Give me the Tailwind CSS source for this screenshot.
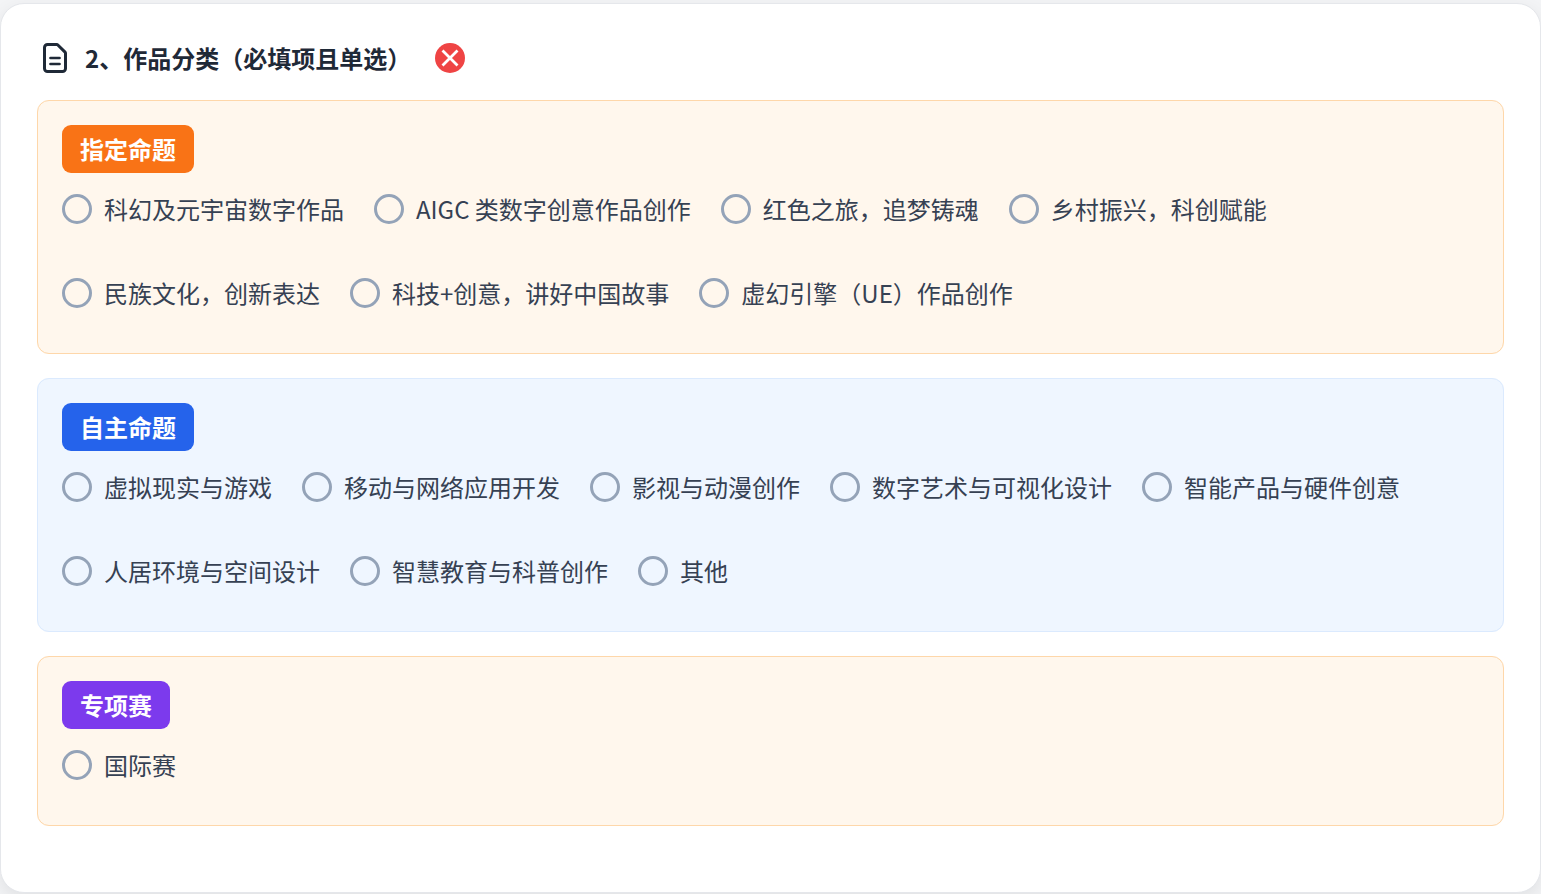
<!DOCTYPE html>
<html lang="zh-CN">

<head>
    <meta charset="UTF-8">
    <meta name="viewport" content="width=device-width, initial-scale=1.0">
    <title>作品分类</title>
    <script src="https://cdn.jsdelivr.net/npm/@tailwindcss/browser@4"></script>
</head>

<body class="flex flex-col min-h-screen pt-[3px] pb-px bg-[#f3f4f6] text-gray-700 text-2xl/9 font-['Noto_Sans_CJK_SC',sans-serif]">

    <form class="flex-1 bg-white border border-[#e5e7eb] rounded-3xl p-9 shadow-[0_6px_18px_rgba(0,0,0,0.08)]">

        <!-- Title -->
        <div class="flex items-center mb-6">
            <svg class="w-9 h-9 mr-3 text-[#1f2937]" viewBox="0 0 24 24" fill="none" stroke="currentColor" stroke-width="2" stroke-linecap="round" stroke-linejoin="round" aria-hidden="true">
                <path d="M13.2 3H7a2 2 0 0 0-2 2v14a2 2 0 0 0 2 2h10a2 2 0 0 0 2-2V8.8a1 1 0 0 0-.3-.7l-4.8-4.8a1 1 0 0 0-.7-.3z" />
                <path d="M9 12h6M9 16h6" stroke-width="1.8" />
            </svg>
            <h2 class="font-semibold text-[#1f2937]">2、作品分类（必填项且单选）</h2>
            <span class="flex items-center justify-center w-[30px] h-[30px] ml-6 rounded-full bg-[#ef4444]">
                <svg class="w-[18px] h-[18px]" viewBox="0 0 18 18" fill="none" stroke="#fff" stroke-width="2.8" aria-hidden="true">
                    <path d="M1.5 1.5l15 15M16.5 1.5l-15 15" />
                </svg>
            </span>
        </div>

        <div class="flex flex-col gap-6">

            <fieldset class="bg-[#fff7ed] border border-[#fed7aa] rounded-xl p-6">
                <legend class="float-left px-[18px] py-1.5 rounded-[9px] bg-[#f97316] text-white font-bold">指定命题</legend>
                <div class="clear-both flex flex-wrap gap-x-[30px] gap-y-12 py-[18px]">
                    <label class="flex items-center gap-3"><input type="radio" name="category" class="appearance-none w-[30px] h-[30px] rounded-full border-3 border-[#94a3b8] checked:bg-[#94a3b8]">科幻及元宇宙数字作品</label>
                    <label class="flex items-center gap-3"><input type="radio" name="category" class="appearance-none w-[30px] h-[30px] rounded-full border-3 border-[#94a3b8] checked:bg-[#94a3b8]">AIGC 类数字创意作品创作</label>
                    <label class="flex items-center gap-3"><input type="radio" name="category" class="appearance-none w-[30px] h-[30px] rounded-full border-3 border-[#94a3b8] checked:bg-[#94a3b8]">红色之旅，追梦铸魂</label>
                    <label class="flex items-center gap-3"><input type="radio" name="category" class="appearance-none w-[30px] h-[30px] rounded-full border-3 border-[#94a3b8] checked:bg-[#94a3b8]">乡村振兴，科创赋能</label>
                    <label class="flex items-center gap-3"><input type="radio" name="category" class="appearance-none w-[30px] h-[30px] rounded-full border-3 border-[#94a3b8] checked:bg-[#94a3b8]">民族文化，创新表达</label>
                    <label class="flex items-center gap-3"><input type="radio" name="category" class="appearance-none w-[30px] h-[30px] rounded-full border-3 border-[#94a3b8] checked:bg-[#94a3b8]">科技+创意，讲好中国故事</label>
                    <label class="flex items-center gap-3"><input type="radio" name="category" class="appearance-none w-[30px] h-[30px] rounded-full border-3 border-[#94a3b8] checked:bg-[#94a3b8]">虚幻引擎（UE）作品创作</label>
                </div>
            </fieldset>

            <fieldset class="bg-[#eff6ff] border border-[#dbeafe] rounded-xl p-6">
                <legend class="float-left px-[18px] py-1.5 rounded-[9px] bg-[#2563eb] text-white font-bold">自主命题</legend>
                <div class="clear-both flex flex-wrap gap-x-[30px] gap-y-12 py-[18px]">
                    <label class="flex items-center gap-3"><input type="radio" name="category" class="appearance-none w-[30px] h-[30px] rounded-full border-3 border-[#94a3b8] checked:bg-[#94a3b8]">虚拟现实与游戏</label>
                    <label class="flex items-center gap-3"><input type="radio" name="category" class="appearance-none w-[30px] h-[30px] rounded-full border-3 border-[#94a3b8] checked:bg-[#94a3b8]">移动与网络应用开发</label>
                    <label class="flex items-center gap-3"><input type="radio" name="category" class="appearance-none w-[30px] h-[30px] rounded-full border-3 border-[#94a3b8] checked:bg-[#94a3b8]">影视与动漫创作</label>
                    <label class="flex items-center gap-3"><input type="radio" name="category" class="appearance-none w-[30px] h-[30px] rounded-full border-3 border-[#94a3b8] checked:bg-[#94a3b8]">数字艺术与可视化设计</label>
                    <label class="flex items-center gap-3"><input type="radio" name="category" class="appearance-none w-[30px] h-[30px] rounded-full border-3 border-[#94a3b8] checked:bg-[#94a3b8]">智能产品与硬件创意</label>
                    <label class="flex items-center gap-3"><input type="radio" name="category" class="appearance-none w-[30px] h-[30px] rounded-full border-3 border-[#94a3b8] checked:bg-[#94a3b8]">人居环境与空间设计</label>
                    <label class="flex items-center gap-3"><input type="radio" name="category" class="appearance-none w-[30px] h-[30px] rounded-full border-3 border-[#94a3b8] checked:bg-[#94a3b8]">智慧教育与科普创作</label>
                    <label class="flex items-center gap-3"><input type="radio" name="category" class="appearance-none w-[30px] h-[30px] rounded-full border-3 border-[#94a3b8] checked:bg-[#94a3b8]">其他</label>
                </div>
            </fieldset>

            <fieldset class="bg-[#fff7ed] border border-[#fed7aa] rounded-xl p-6">
                <legend class="float-left px-[18px] py-1.5 rounded-[9px] bg-[#7c3aed] text-white font-bold">专项赛</legend>
                <div class="clear-both flex flex-wrap gap-x-[30px] gap-y-12 py-[18px]">
                    <label class="flex items-center gap-3"><input type="radio" name="category" class="appearance-none w-[30px] h-[30px] rounded-full border-3 border-[#94a3b8] checked:bg-[#94a3b8]">国际赛</label>
                </div>
            </fieldset>

        </div>
    </form>

</body>

</html>
